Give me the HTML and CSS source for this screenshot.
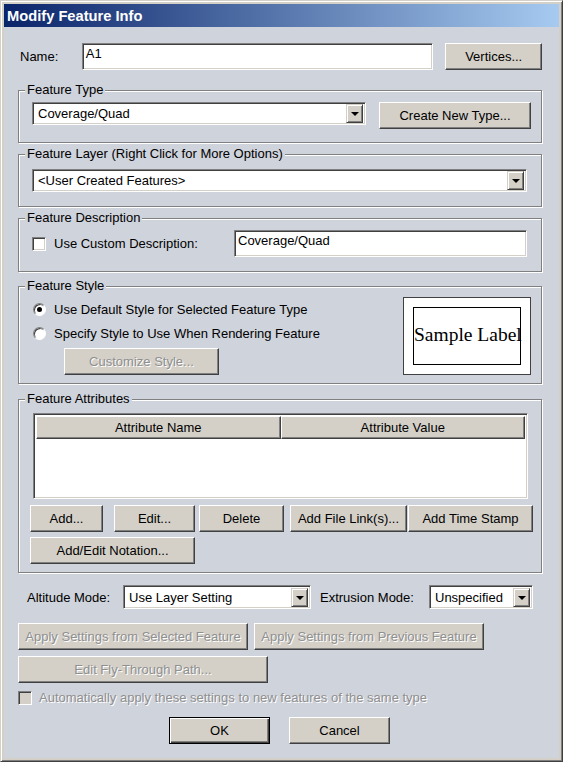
FILE: index.html
```html
<!DOCTYPE html>
<html lang="en">
<head>
	<meta charset="UTF-8">
	<title>Modify Feature Info</title>
	<link rel="stylesheet" href="styles.css">
</head>
<body>
	<div class="window">
		<div class="caption">Modify Feature Info</div>
		<div class="client">
			<!-- name -->
			<div class="row name-row">
				<span class="name-label">Name:</span>
				<div class="edit name-edit">A1</div>
				<button class="btn vertices">Vertices...</button>
			</div>

			<!-- type -->
			<div class="group type-group">
				<div class="legend">Feature Type</div>
				<div class="row">
					<div class="combo type-combo"><span>Coverage/Quad</span><b class="drop"></b></div>
					<button class="btn new-type">Create New Type...</button>
				</div>
			</div>

			<!-- layer -->
			<div class="group layer-group">
				<div class="legend">Feature Layer (Right Click for More Options)</div>
				<div class="combo layer-combo"><span>&lt;User Created Features&gt;</span><b class="drop"></b></div>
			</div>

			<!-- description -->
			<div class="group desc-group">
				<div class="legend">Feature Description</div>
				<div class="row">
					<span class="check"></span>
					<span class="check-label">Use Custom Description:</span>
					<div class="edit desc-edit">Coverage/Quad</div>
				</div>
			</div>

			<!-- style -->
			<div class="group style-group">
				<div class="legend">Feature Style</div>
				<div class="row style-row">
					<div class="style-options">
						<div class="option"><span class="radio checked"></span>Use Default Style for Selected Feature Type</div>
						<div class="option"><span class="radio"></span>Specify Style to Use When Rendering Feature</div>
						<button class="btn disabled customize">Customize Style...</button>
					</div>
					<div class="sample">
						<div class="sample-inner">Sample Label</div>
					</div>
				</div>
			</div>

			<!-- attributes -->
			<div class="group attr-group">
				<div class="legend">Feature Attributes</div>
				<div class="list">
					<div class="list-head">
						<div class="col">Attribute Name</div>
						<div class="col">Attribute Value</div>
					</div>
				</div>
				<div class="row attr-buttons">
					<button class="btn b-add">Add...</button>
					<button class="btn b-edit">Edit...</button>
					<button class="btn b-delete">Delete</button>
					<button class="btn b-link">Add File Link(s)...</button>
					<button class="btn b-stamp">Add Time Stamp</button>
				</div>
				<div class="row attr-buttons">
					<button class="btn b-notation">Add/Edit Notation...</button>
				</div>
			</div>

			<!-- modes -->
			<div class="row mode-row">
				<span class="mode-label">Altitude Mode:</span>
				<div class="combo alt-combo"><span>Use Layer Setting</span><b class="drop"></b></div>
				<span class="mode-label extr-label">Extrusion Mode:</span>
				<div class="combo extr-combo"><span>Unspecified</span><b class="drop"></b></div>
			</div>

			<div class="row apply-row">
				<button class="btn disabled apply">Apply Settings from Selected Feature</button>
				<button class="btn disabled apply apply-prev">Apply Settings from Previous Feature</button>
			</div>
			<div class="row fly-row">
				<button class="btn disabled fly">Edit Fly-Through Path...</button>
			</div>

			<div class="row auto-row">
				<span class="check disabled"></span>
				<span class="auto-label">Automatically apply these settings to new features of the same type</span>
			</div>

			<div class="row ok-row">
				<button class="btn default">OK</button>
				<button class="btn cancel">Cancel</button>
			</div>
		</div>
	</div>
</body>
</html>
```

FILE: styles.css
```css
/*common*/
*{
	margin: 0;
	padding: 0;
	box-sizing: border-box;
}
body{
	font: 13px "Liberation Sans", Arial, sans-serif;
	color: #000;
	background-color: #d4d0c8;
}
.row{
	display: flex;
	align-items: flex-start;
}

/*window frame*/
.window{
	width: 563px;
	height: 762px;
	padding: 3px;
	display: flex;
	flex-direction: column;
	background-color: #d4d0c8;
	border: 1px solid;
	border-color: #d4d0c8 #404040 #404040 #d4d0c8;
	box-shadow: inset 1px 1px #fff, inset -1px -1px #808080;
}
.caption{
	height: 23px;
	line-height: 24px;
	padding-left: 3px;
	color: #fff;
	font-weight: bold;
	font-size: 14.7px;
	background: linear-gradient(to right, #0a246a, #a6caf0);
}
.client{
	flex: 1;
	padding: 16px 17px 0 14px;
	background-color: #cfd3db;
}

/*controls*/
.btn{
	height: 27px;
	font: inherit;
	color: #000;
	text-align: center;
	background-color: #d4d0c8;
	border: 1px solid;
	border-color: #fff #404040 #404040 #fff;
	box-shadow: inset -1px -1px #808080;
}
.btn.disabled{
	color: #8f8f8f;
	text-shadow: 1px 1px #fff;
}
.btn.default{
	border: 1px solid #000;
	box-shadow: inset 1px 1px #fff, inset -1px -1px #404040, inset -2px -2px #808080;
}
.edit{
	height: 27px;
	padding: 2px 3px;
	line-height: 15px;
	background-color: #fff;
	border: 1px solid;
	border-color: #808080 #fff #fff #808080;
	box-shadow: inset 1px 1px #404040, inset -1px -1px #d4d0c8;
}
.combo{
	height: 23px;
	display: flex;
	align-items: center;
	padding: 2px;
	background-color: #fff;
	border: 1px solid;
	border-color: #808080 #fff #fff #808080;
	box-shadow: inset 1px 1px #404040, inset -1px -1px #d4d0c8;
}
.combo span{
	flex: 1;
	padding-left: 3px;
	white-space: nowrap;
	overflow: hidden;
}
.drop{
	width: 17px;
	height: 19px;
	display: flex;
	align-items: center;
	justify-content: center;
	background-color: #d4d0c8;
	border: 1px solid;
	border-color: #d4d0c8 #404040 #404040 #d4d0c8;
	box-shadow: inset 1px 1px #fff, inset -1px -1px #808080;
}
.drop:after{
	content: "";
	margin-top: 1px;
	border-left: 4px solid transparent;
	border-right: 4px solid transparent;
	border-top: 4px solid #000;
}
.check{
	width: 14px;
	height: 14px;
	flex: none;
	background-color: #fff;
	border: 1px solid;
	border-color: #808080 #fff #fff #808080;
	box-shadow: inset 1px 1px #404040, inset -1px -1px #d4d0c8;
}
.check.disabled{
	background-color: #d4d0c8;
}
.radio{
	width: 13px;
	height: 13px;
	flex: none;
	display: flex;
	align-items: center;
	justify-content: center;
	margin: 0 8px 0 1px;
	border-radius: 50%;
	background-color: #fff;
	border: 1px solid;
	border-color: #808080 #fff #fff #808080;
	box-shadow: inset 1px 1px #404040;
}
.radio.checked:after{
	content: "";
	width: 5px;
	height: 5px;
	border-radius: 50%;
	background-color: #000;
}

/*group boxes*/
.group{
	border: 1px solid #808080;
	box-shadow: inset 1px 1px #fff, 1px 1px #fff;
	padding-left: 13px;
}
.legend{
	display: table;
	margin: -8px 0 0 -7px;
	padding: 0 2px;
	line-height: 14px;
	background-color: #cfd3db;
}

/*name*/
.name-row{
	padding-left: 2px;
}
.name-label{
	width: 62px;
	line-height: 28px;
}
.name-edit{
	width: 353px;
}
.vertices{
	width: 97px;
	margin-left: 12px;
}

/*type*/
.type-group{
	margin-top: 19px;
	padding-bottom: 13px;
}
.type-group .legend{
	margin-bottom: 5px;
}
.type-combo{
	width: 334px;
}
.new-type{
	width: 152px;
	margin-left: 13px;
}

/*layer*/
.layer-group{
	margin-top: 11px;
	padding-bottom: 14px;
}
.layer-group .legend{
	margin-bottom: 8px;
}
.layer-combo{
	width: 495px;
}

/*description*/
.desc-group{
	margin-top: 11px;
	padding-bottom: 13px;
}
.desc-group .legend{
	margin-bottom: 5px;
}
.desc-group .check{
	margin-top: 7px;
}
.check-label{
	width: 188px;
	padding-left: 8px;
	line-height: 28px;
}
.desc-edit{
	width: 293px;
}

/*style*/
.style-group{
	margin-top: 14px;
	padding-bottom: 8px;
}
.style-group .legend{
	margin-bottom: 4px;
}
.style-options{
	width: 371px;
}
.option{
	height: 24px;
	display: flex;
	align-items: center;
}
.customize{
	width: 155px;
	margin: 3px 0 0 32px;
}
.sample{
	width: 128px;
	height: 78px;
	padding: 9px;
	background-color: #fff;
	border: 1px solid #404040;
}
.sample-inner{
	height: 100%;
	border: 1px solid #000;
	font: 19.5px "Liberation Serif", "Times New Roman", serif;
	line-height: 54px;
	white-space: nowrap;
}

/*attributes*/
.attr-group{
	margin-top: 15px;
	padding-bottom: 8px;
	padding-left: 14px;
}
.attr-group .legend{
	margin: -8px 0 7px -8px;
}
.list{
	width: 495px;
	height: 86px;
	padding: 2px;
	background-color: #fff;
	border: 1px solid;
	border-color: #808080 #fff #fff #808080;
	box-shadow: inset 1px 1px #404040, inset -1px -1px #d4d0c8;
}
.list-head{
	display: flex;
}
.col{
	width: 245px;
	height: 23px;
	line-height: 21px;
	text-align: center;
	background-color: #d4d0c8;
	border: 1px solid;
	border-color: #fff #404040 #404040 #fff;
	box-shadow: inset -1px -1px #808080;
}
.attr-buttons{
	margin: 6px 0 0 -3px;
}
.attr-buttons + .attr-buttons{
	margin-top: 5px;
}
.b-add{ width: 73px; }
.b-edit{ width: 81px; margin-left: 11px; }
.b-delete{ width: 85px; margin-left: 4px; }
.b-link{ width: 117px; margin-left: 6px; }
.b-stamp{ width: 125px; margin-left: 1px; }
.b-notation{ width: 165px; }

/*modes*/
.mode-row{
	margin-top: 12px;
	align-items: center;
	padding-left: 9px;
}
.mode-label{
	width: 96px;
}
.extr-label{
	width: 109px;
	margin-left: 9px;
}
.combo.alt-combo,
.combo.extr-combo{
	height: 24px;
}
.alt-combo{
	width: 188px;
}
.extr-combo{
	width: 104px;
}

/*apply buttons*/
.apply-row{
	margin-top: 14px;
}
.apply{
	width: 230px;
}
.apply-prev{
	margin-left: 6px;
}
.fly-row{
	margin-top: 6px;
}
.fly{
	width: 250px;
}
.auto-row{
	margin-top: 7px;
	align-items: center;
}
.auto-label{
	padding-left: 7px;
	color: #8f8f8f;
	text-shadow: 1px 1px #fff;
}

/*ok cancel*/
.ok-row{
	margin: 12px 0 0 151px;
}
.ok-row .btn{
	width: 101px;
}
.cancel{
	margin-left: 19px;
}
```
